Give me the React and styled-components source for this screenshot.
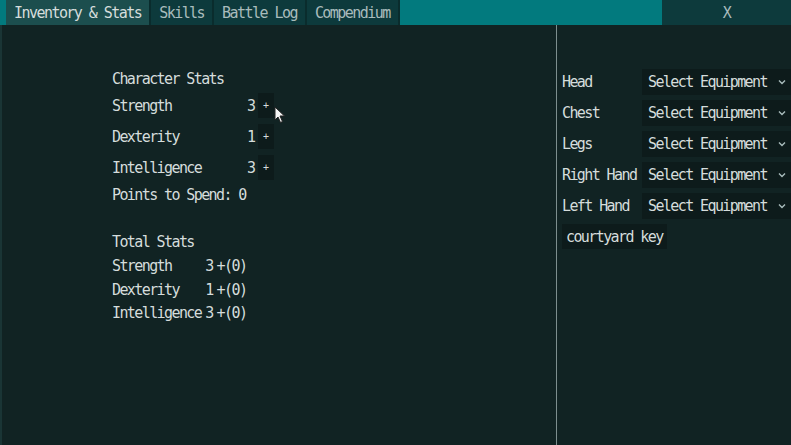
import styled, { createGlobalStyle } from 'styled-components';

const colors = {
  bg: '#112323',
  teal: '#027a7e',
  tabActive: '#1c4e4e',
  tab: '#0d3a3c',
  tabGap: '#0a2c2d',
  text: '#d5dddc',
  textDim: '#a9bcbc',
  well: '#0d1b1b',
  divider: '#7d8e8e',
};

const GlobalStyle = createGlobalStyle`
  html, body {
    margin: 0;
    padding: 0;
    background: ${colors.bg};
  }
  body {
    font-family: "DejaVu Sans Mono", "Liberation Mono", monospace;
    font-size: 15px;
    letter-spacing: -1.6px;
    color: ${colors.text};
  }
`;

const Screen = styled.div`
  width: 791px;
  height: 445px;
  display: flex;
  flex-direction: column;
  overflow: hidden;
  position: relative;
`;

const TabBar = styled.div`
  height: 25px;
  display: flex;
  background: ${colors.teal};
  padding-left: 6px;
`;

const TabList = styled.div`
  display: flex;
  gap: 2px;
  background: ${colors.tabGap};
  flex: 1;
  & > :last-child { flex: 1; background: ${colors.teal}; }
`;

const Tab = styled.div`
  display: flex;
  align-items: center;
  padding: 0 8px;
  letter-spacing: -1.55px;
  background: ${p => (p.$active ? colors.tabActive : colors.tab)};
  color: ${p => (p.$active ? colors.text : colors.textDim)};
  white-space: nowrap;
`;

const Filler = styled.div``;

const CloseButton = styled.div`
  width: 129px;
  display: flex;
  align-items: center;
  justify-content: center;
  background: ${colors.tab};
  color: ${colors.textDim};
`;

const Body = styled.div`
  flex: 1;
  display: flex;
  border-left: 2px solid #1a3535;
`;

const StatsPane = styled.div`
  width: 555px;
  padding: 46px 0 0 110px;
  box-sizing: border-box;
  border-right: 1px solid ${colors.divider};
`;

const Heading = styled.div`
  height: 17px;
  line-height: 17px;
  margin-bottom: 5px;
`;

const StatRow = styled.div`
  display: grid;
  grid-template-columns: 135px 11px 16px;
  align-items: center;
  height: 25px;
  margin-bottom: 6px;
`;

const PlusButton = styled.div`
  height: 25px;
  background: ${colors.well};
  display: flex;
  align-items: center;
  justify-content: center;
  font-size: 10px;
  letter-spacing: 0;
`;

const Points = styled.div`
  height: 18px;
  line-height: 18px;
`;

const TotalSection = styled.div`
  margin-top: 30px;
`;

const TotalGrid = styled.div`
  display: grid;
  grid-template-columns: auto auto 1fr;
  row-gap: 6.5px;
  margin-top: 7px;
  line-height: 17px;
  & > span:nth-child(3n+2) { padding-left: 4px; }
  & > span:nth-child(3n) { padding-left: 4px; }
`;

const EquipPane = styled.div`
  flex: 1;
  padding: 44px 0 0 5px;
`;

const EquipRow = styled.div`
  display: grid;
  grid-template-columns: 80px 1fr;
  align-items: center;
  height: 26px;
  margin-bottom: 5px;
`;

const Select = styled.div`
  height: 26px;
  background: ${colors.well};
  display: flex;
  align-items: center;
  justify-content: space-between;
  padding: 0 4px 0 6px;
  svg { flex: none; }
`;

const ItemChip = styled.div`
  display: inline-flex;
  align-items: center;
  height: 25px;
  padding: 0 4px;
  background: ${colors.well};
`;

const Cursor = styled.svg`
  position: absolute;
  left: 274px;
  top: 106px;
`;

const stats = [
  { name: 'Strength', value: 3 },
  { name: 'Dexterity', value: 1 },
  { name: 'Intelligence', value: 3 },
];

const slots = ['Head', 'Chest', 'Legs', 'Right Hand', 'Left Hand'];

const Chevron = () => (
  <svg width="10" height="10" viewBox="0 0 10 10">
    <path d="M2 3.5 L5 6.5 L8 3.5" fill="none" stroke={colors.textDim} strokeWidth="1.4" />
  </svg>
);

export default function App() {
  return (
    <Screen>
      <GlobalStyle />
      <TabBar>
        <TabList>
          <Tab $active>Inventory &amp; Stats</Tab>
          <Tab>Skills</Tab>
          <Tab>Battle Log</Tab>
          <Tab>Compendium</Tab>
          <Filler />
        </TabList>
        <CloseButton>X</CloseButton>
      </TabBar>
      <Body>
        <StatsPane>
          <Heading>Character Stats</Heading>
          {stats.map(s => (
            <StatRow key={s.name}>
              <span>{s.name}</span>
              <span>{s.value}</span>
              <PlusButton>+</PlusButton>
            </StatRow>
          ))}
          <Points>Points to Spend: 0</Points>
          <TotalSection>
            <Heading>Total Stats</Heading>
            <TotalGrid>
              {stats.map(s => [
                <span key={s.name + 'n'}>{s.name}</span>,
                <span key={s.name + 'v'}>{s.value}</span>,
                <span key={s.name + 'b'}>+(0)</span>,
              ])}
            </TotalGrid>
          </TotalSection>
        </StatsPane>
        <EquipPane>
          {slots.map(slot => (
            <EquipRow key={slot}>
              <span>{slot}</span>
              <Select>
                Select Equipment
                <Chevron />
              </Select>
            </EquipRow>
          ))}
          <ItemChip>courtyard key</ItemChip>
        </EquipPane>
      </Body>
      <Cursor width="12" height="18" viewBox="0 0 12 18">
        <path d="M1 1 L1 14 L4 11 L6.5 16.5 L8.5 15.5 L6 10 L10.5 10 Z" fill="#f4f4f4" stroke="#222" strokeWidth="1" />
      </Cursor>
    </Screen>
  );
}
